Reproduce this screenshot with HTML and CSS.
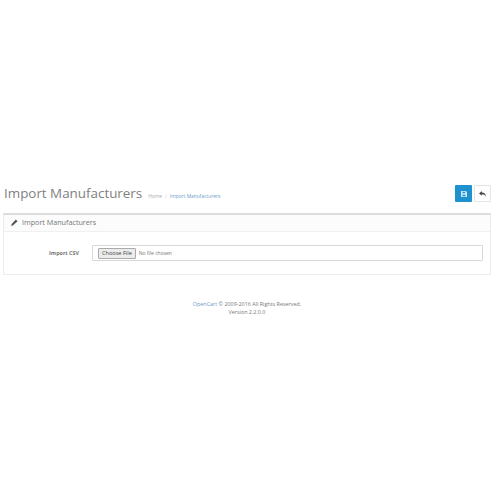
FILE: index.html
```html
<!DOCTYPE html>
<html lang="en">
<head>
  <meta charset="UTF-8">
  <meta name="viewport" content="width=device-width, initial-scale=1.0">
  <title>Import Manufacturers</title>
  <link rel="stylesheet" href="styles.css">
</head>
<body>

  <div class="page-header">
    <div class="title-wrap">
      <h1>Import Manufacturers</h1>
      <ul class="breadcrumb">
        <li>Home</li>
        <li class="sep">/</li>
        <li><a href="#">Import Manufacturers</a></li>
      </ul>
    </div>
    <div class="actions">
      <button class="btn btn-primary" type="button">
        <svg width="6" height="6" viewBox="0 0 8 8"><path fill="#cfe8f6" d="M0 0h6.500L8 1.500V8H0zM2 1v2h3.500V1zM2 5v2h4V5z"/></svg>
      </button>
      <button class="btn btn-default" type="button">
        <svg width="7" height="6" viewBox="0 0 8 7"><path fill="#444" d="M3.200 0v1.700C6 1.700 8 3.200 8 7 7.200 4.700 5.800 3.900 3.200 3.900v1.700L0 2.800z"/></svg>
      </button>
    </div>
  </div>

  <div class="panel">
    <div class="panel-heading">
      <svg width="7" height="7" viewBox="0 0 8 8"><path fill="#555" d="M5.500 0.500l2 2L2.400 7.200 0 8l.8-2.400z"/></svg>
      <h3>Import Manufacturers</h3>
    </div>
    <div class="panel-body">
      <label class="field-label">Import CSV</label>
      <div class="form-control">
        <span class="file-btn">Choose File</span>
        <span class="file-name">No file chosen</span>
      </div>
    </div>
  </div>

  <footer>
    <a href="#">OpenCart</a> &copy; 2009-2016 All Rights Reserved.<br>
    Version 2.2.0.0
  </footer>

</body>
</html>
```

FILE: styles.css
```css
body {
  font-family: 'Open Sans', sans-serif;
  background-color: #fff;
  margin: 0;
  padding: 183px 9px 0 3px;
  color: #666;
}

a {
  color: #6a9bc9;
  text-decoration: none;
}

.page-header {
  display: flex;
  justify-content: space-between;
  align-items: flex-start;
  height: 30px;
}

.title-wrap {
  display: flex;
  align-items: center;
  height: 20px;
}

h1 {
  font-size: 13.400px;
  font-weight: 400;
  line-height: 20px;
  color: #7f7f7f;
  margin: 0 0 0 1px;
}

.breadcrumb {
  display: flex;
  gap: 3px;
  list-style: none;
  margin: 5px 0 0 6px;
  padding: 0;
  font-size: 4.900px;
  color: #aaa;
}

.sep {
  color: #ccc;
}

.actions {
  display: flex;
  gap: 2px;
  margin-top: 2px;
}

.btn {
  display: flex;
  align-items: center;
  justify-content: center;
  width: 17px;
  height: 17px;
  padding: 0;
  border-radius: 1px;
  cursor: pointer;
}

.btn-primary {
  background-color: #1e91cf;
  border: none;
}

.btn-default {
  background-color: #fff;
  border: 1px solid #e4e4e4;
}

.panel {
  border: 1px solid #ececec;
  border-top: 2px solid #dcdcdc;
  height: 59px;
}

.panel-heading {
  display: flex;
  align-items: center;
  gap: 4px;
  height: 14px;
  padding: 0 0 2px 7px;
  background-color: #fcfcfc;
  border-bottom: 1px solid #f0f0f0;
}

h3 {
  font-size: 7.200px;
  font-weight: 400;
  color: #777;
  margin: 0;
}

.panel-body {
  display: flex;
  align-items: center;
  padding: 13px 7px 0 0;
}

.field-label {
  width: 75px;
  text-align: right;
  font-size: 5.400px;
  font-weight: 700;
  color: #777;
  margin-right: 13px;
}

.form-control {
  flex: 1;
  display: flex;
  align-items: center;
  gap: 3px;
  height: 16px;
  padding-left: 5px;
  border: 1px solid #d8d8d8;
  border-radius: 1px;
  box-sizing: border-box;
}

.file-btn {
  font-family: 'Open Sans', sans-serif;
  font-size: 5.600px;
  line-height: 9px;
  padding: 0 3px;
  color: #444;
  background-color: #ececec;
  border: 1px solid #aaa;
  border-radius: 1px;
}

.file-name {
  font-size: 5px;
  color: #777;
}

footer {
  margin-top: 25px;
  text-align: center;
  font-size: 5.400px;
  line-height: 8px;
  color: #777;
}
```
